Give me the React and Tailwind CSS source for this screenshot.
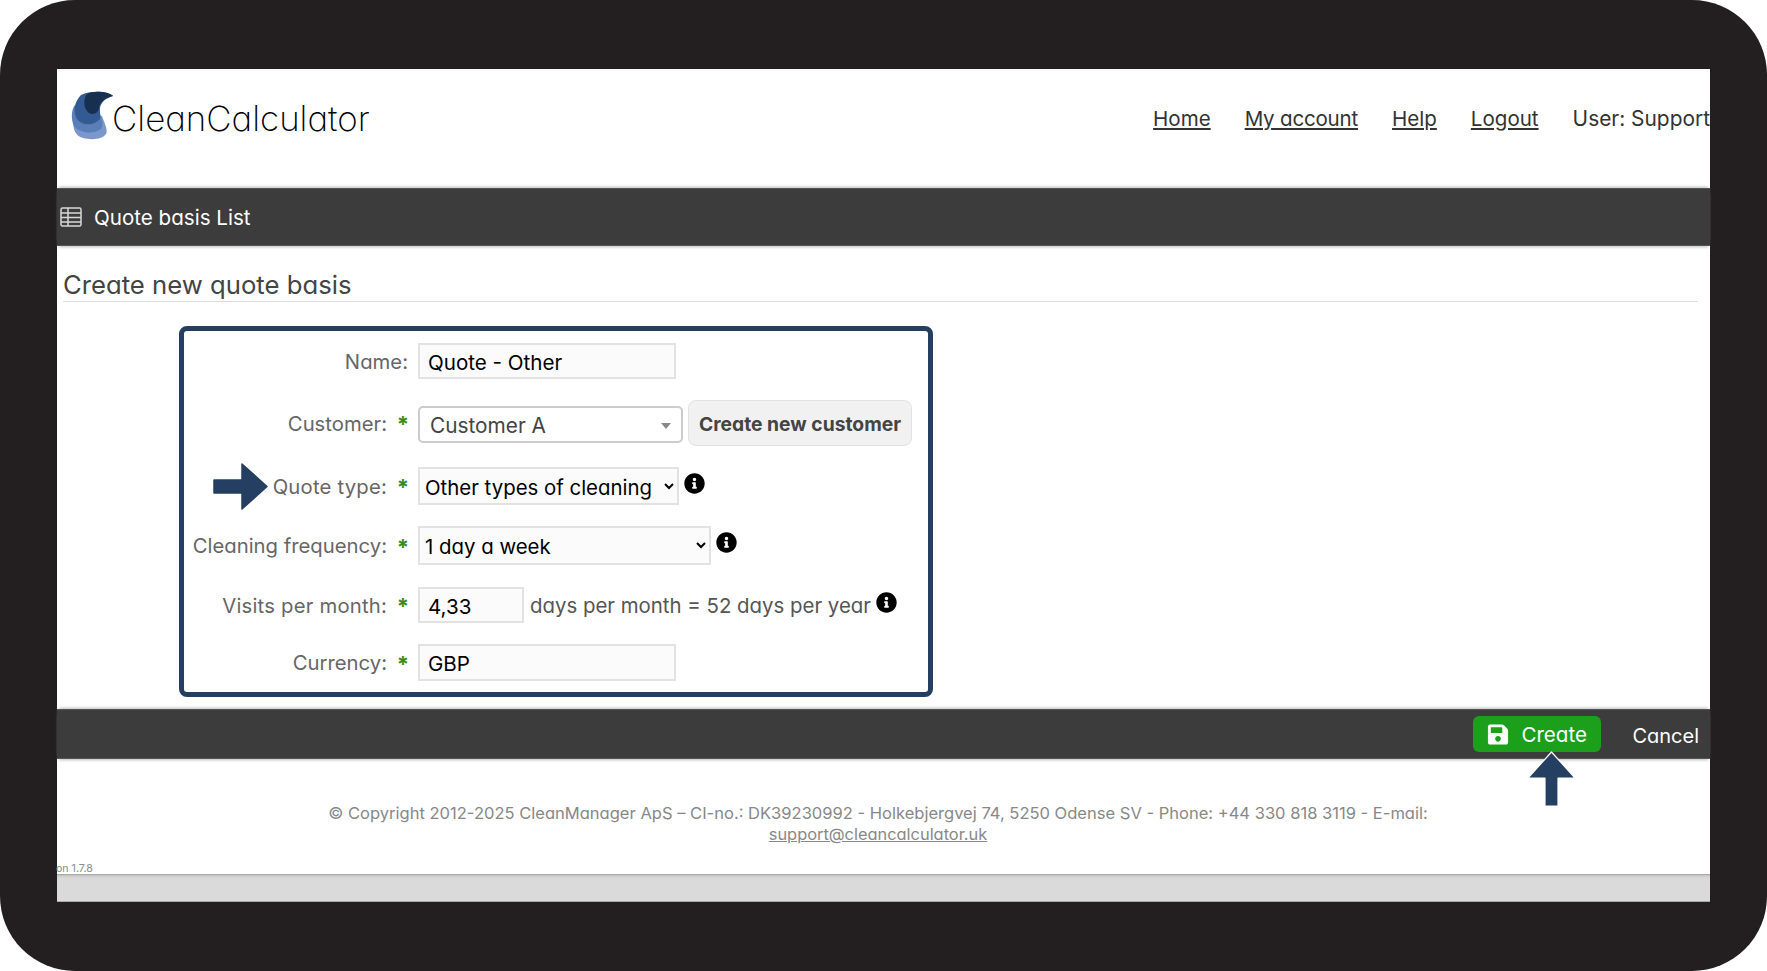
import React from 'react';
import { FaInfoCircle, FaSave } from 'react-icons/fa';

const font = "font-['Inter','Lato',sans-serif] [font-feature-settings:'cv11']";
const barShadow = 'shadow-[0_3px_3px_-2px_#bbb,0_-3px_3px_-2px_#bbb]';

const Star = () => <span className="w-[22px] text-right text-[22px] font-bold leading-none text-[#3c8a1e]">*</span>;

const Label = ({ text, star = true, wide = false }) => (
  <div className={`flex w-[225px] shrink-0 items-center justify-end pt-[2px] text-[20.3px] text-[#666] ${star ? '' : 'pr-[1px]'}`}>
    <span className={`whitespace-nowrap ${wide ? 'tracking-[0.2px]' : ''}`}>{text}</span>
    {star && <Star />}
  </div>
);

const Info = () => <FaInfoCircle className="ml-[5px] -mt-[6px] h-[21px] w-[21px] shrink-0 text-black" />;

const inputClass = 'border-2 border-[#e2e2e2] bg-[#fbfbfb] px-[8px] pt-[2px] text-[20.6px] text-black outline-none';
const selectClass = 'border-2 border-[#e2e2e2] bg-[#fbfbfb] pl-[1px] pr-[2px] pt-[2px] text-[20.4px] text-black outline-none';

const Logo = () => (
  <svg viewBox="0 0 42 50" className="h-[50px] w-[42px] shrink-0">
    <path d="M3 30 C1 38 4 46 12 48 C20 50 32 50 35.5 43 C36.5 38 33 32 31 26 L20 24 Z" fill="#7b97cb" />
    <path d="M4 15 C0 20 0 30 3 36 C8 43 22 45 30 39 C33 35 31 30 29 24 L14 10 Z" fill="#5a7fb8" />
    <path d="M10 5 C3 12 2 22 6 29 C11 36 23 36 29 29 C30 26 28.5 22 29 18 C30 12 35 8 42 6 C36 1 20 0 10 5 Z" fill="#335a92" />
    <path d="M15 5 C12 12 13 19 18 23 C22 25 27 24 28 18 C29 11 35 8 42.3 6 C38 2 30 1 24 2 C20 2 17 3 15 5 Z" fill="#17304f" />
  </svg>
);

const TableIcon = () => (
  <svg viewBox="0 0 22 20" className="h-[20px] w-[22px] shrink-0" fill="none" stroke="#d8d8d8" strokeWidth="1.5">
    <rect x="1" y="1" width="20" height="18" rx="1.5" />
    <path d="M1 6h20M1 10.5h20M1 15h20M8 1v18" />
  </svg>
);

export default function App() {
  return (
    <div className={`h-[971px] w-[1767px] overflow-hidden bg-white ${font}`}>
      <div className="relative flex h-full flex-col rounded-[75px] bg-[#231f20] px-[57px] pb-[69px] pt-[69px]">
        <header className="flex h-[119px] items-start justify-between overflow-hidden bg-white pl-[14px]">
          <div className="mt-[21px] flex items-start">
            <Logo />
            <span className="mt-[6px] -ml-[1px] text-[34.9px] font-extralight leading-[44px] text-black">CleanCalculator</span>
          </div>
          <nav className="mt-[37px] flex gap-[34px] whitespace-nowrap text-[20.55px] leading-[26px] text-[#333]">
            <a className="underline">Home</a>
            <a className="tracking-[-0.2px] underline">My account</a>
            <a className="underline">Help</a>
            <a className="underline">Logout</a>
            <span className="text-[20.9px]">User: Support</span>
          </nav>
        </header>

        <div className={`z-10 flex h-[58px] items-center gap-[12px] border-y border-[#555] bg-[#3c3c3c] pl-[3px] text-[20.6px] text-white ${barShadow}`}>
          <TableIcon />
          <span className="pt-[2px]">Quote basis List</span>
        </div>

        <main className="flex flex-1 flex-col bg-white">
          <h2 className="ml-[6px] mr-[12px] flex h-[56px] items-end border-b border-[#ddd] pb-[1px] text-[25.7px] font-normal leading-[30px] text-[#444]">Create new quote basis</h2>

          <form className="ml-[122px] mt-[24px] flex h-[371px] w-[754px] flex-col gap-[21px] rounded-lg border-[5px] border-[#253f63] pt-[12px]">
            <div className="flex h-[36px] items-center gap-[9px]">
              <Label text="Name:" star={false} />
              <input readOnly value="Quote - Other" className={`h-[36px] w-[258px] ${inputClass}`} />
            </div>
            <div className="flex h-[46px] items-center gap-[9px]">
              <Label text="Customer:" />
              <div className="mt-[3px] flex h-[37px] w-[265px] items-center justify-between rounded-[5px] border-2 border-[#ccc] bg-white pl-[10px] pr-[10px] pt-[3px] text-[20.8px] text-[#444]">
                <span>Customer A</span>
                <span className="h-0 w-0 border-x-[5px] border-t-[6px] border-x-transparent border-t-[#888]" />
              </div>
              <button type="button" className="-ml-[4px] h-[46px] w-[224px] rounded-[8px] border border-[#e2e2e2] bg-[#f1f1f1] pt-[2px] text-[19.3px] font-bold whitespace-nowrap text-[#444]">Create new customer</button>
            </div>
            <div className="flex h-[38px] items-center gap-[9px]">
              <Label text="Quote type:" wide />
              <div className="flex items-center">
                <select className={`h-[38px] w-[261px] ${selectClass}`} defaultValue="o">
                  <option value="o">Other types of cleaning</option>
                </select>
                <Info />
              </div>
            </div>
            <div className="flex h-[39px] items-center gap-[9px]">
              <Label text="Cleaning frequency:" />
              <div className="flex items-center">
                <select className={`h-[39px] w-[293px] ${selectClass}`} defaultValue="1">
                  <option value="1">1 day a week</option>
                </select>
                <Info />
              </div>
            </div>
            <div className="mt-[1px] flex h-[36px] items-center gap-[9px]">
              <Label text="Visits per month:" wide />
              <div className="flex items-center">
                <input readOnly value="4,33" className={`h-[36px] w-[106px] ${inputClass}`} />
                <span className="ml-[6px] whitespace-nowrap pt-[2px] text-[20.4px] text-[#555]">days per month = 52 days per year</span>
                <Info />
              </div>
            </div>
            <div className="flex h-[37px] items-center gap-[9px]">
              <Label text="Currency:" />
              <input readOnly value="GBP" className={`h-[37px] w-[258px] ${inputClass}`} />
            </div>
          </form>

          <div className={`mt-[12px] flex h-[50px] items-center justify-end border-y border-[#555] bg-[#3c3c3c] pr-[11px] text-[20.6px] text-white ${barShadow}`}>
            <button type="button" className="flex h-[36px] w-[128px] items-center rounded-[6px] bg-[#1ca01c] pl-[14px] pt-[1px] text-white">
              <FaSave className="mr-[12px] h-[23px] w-[22px]" />
              <span className="pt-[2px]">Create</span>
            </button>
            <span className="ml-[31px] pt-[3px] text-[20px]">Cancel</span>
          </div>

          <footer className="flex flex-1 flex-col justify-between">
            <div className="mr-[11px] pt-[44px] text-center text-[16.55px] leading-[21px] text-[#888]">
              <p className="whitespace-nowrap">© Copyright 2012-2025 CleanManager ApS – CI-no.: DK39230992 - Holkebjergvej 74, 5250 Odense SV - Phone: +44 330 818 3119 - E-mail:</p>
              <a className="text-[16.4px] underline">support@cleancalculator.uk</a>
            </div>
            <span className="-ml-[1px] text-[10.6px] leading-[10px] text-[#888]">on 1.7.8</span>
          </footer>

          <div className="h-[28px] border-y border-y-[#aaa] bg-[#dadada] shadow-[inset_0_3px_3px_-2px_#bbb]" />
        </main>

        <svg viewBox="0 0 55 47" className="absolute left-[213px] top-[463px] h-[47px] w-[55px]">
          <path d="M1 17 H29 V1 L54 23.5 L29 46 V30 H1 Z" fill="#253f63" stroke="#253f63" strokeWidth="1.5" strokeLinejoin="round" />
        </svg>
        <svg viewBox="0 0 49 56" className="absolute left-[1527px] top-[751px] h-[56px] w-[49px]">
          <path d="M24.5 1 L48 27 H31 V55 H18 V27 H1 Z" fill="#253f63" stroke="#fff" strokeWidth="1.2" strokeLinejoin="round" />
        </svg>
      </div>
    </div>
  );
}
